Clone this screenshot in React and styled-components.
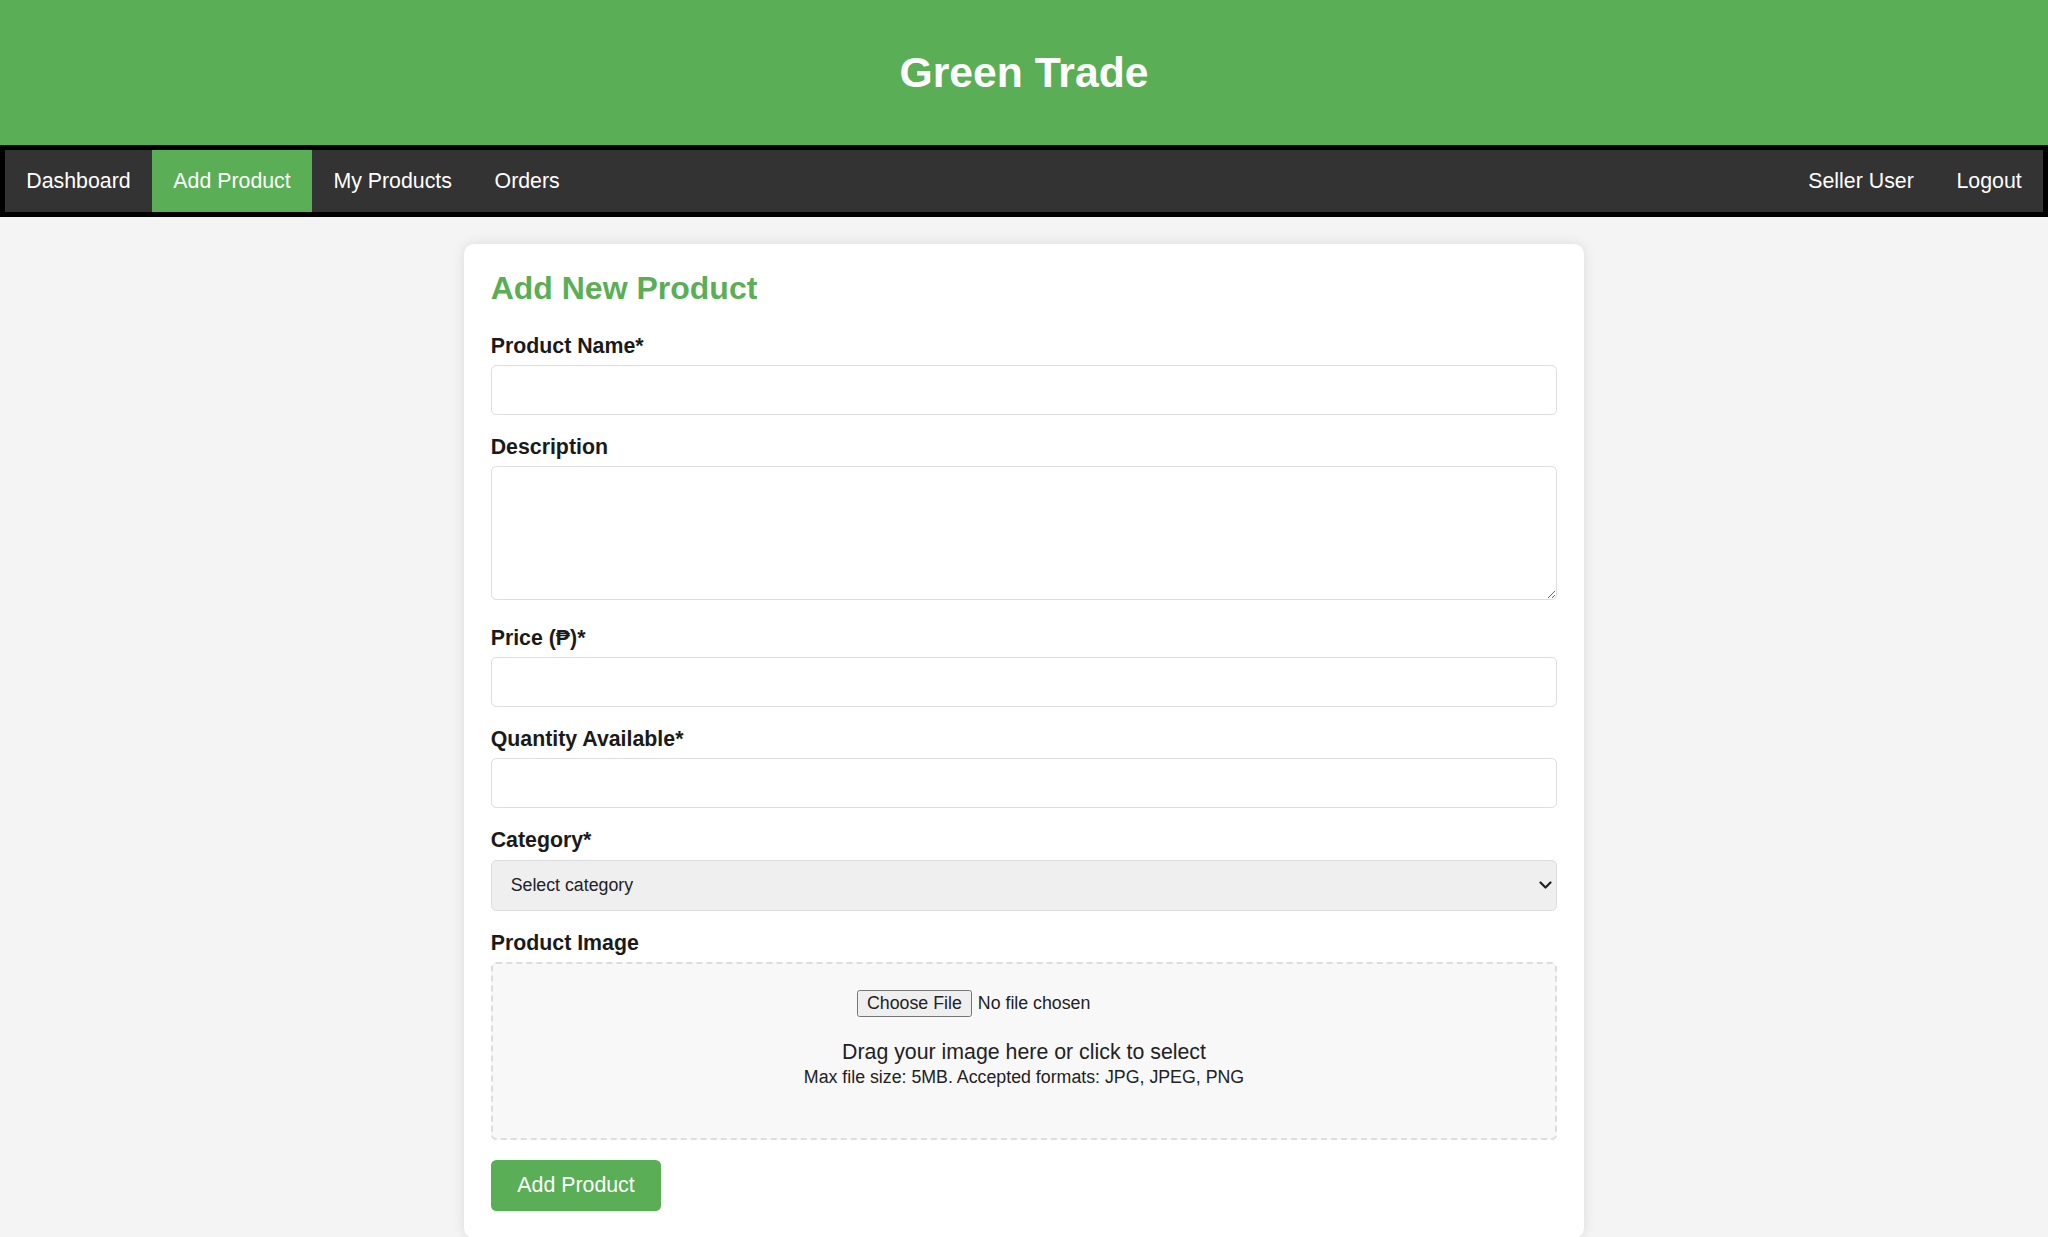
import React from "react";
import styled, { createGlobalStyle } from "styled-components";

const GREEN = "#5aae55";

const Global = createGlobalStyle`
  html, body { margin: 0; padding: 0; }
  body {
    background: #f4f4f4;
    font-family: "Liberation Sans", Arial, sans-serif;
    font-size: 21.33px;
    color: #222;
  }
  * { box-sizing: border-box; }
`;

const Header = styled.header`
  background: ${GREEN};
  color: #fff;
  text-align: center;
  padding: 48px 0;
`;

const Title = styled.h1`
  margin: 0;
  font-size: 42.67px;
  font-weight: bold;
  line-height: 49px;
`;

const Nav = styled.nav`
  display: flex;
  align-items: stretch;
  background: #333;
  border: 5px solid #000;
  height: 72px;
`;

const NavGroup = styled.div`
  display: flex;
  align-items: stretch;
  margin-left: ${(p) => (p.$right ? "auto" : "0")};
`;

const NavLink = styled.a`
  display: flex;
  align-items: center;
  padding: 0 21.33px;
  color: #fff;
  text-decoration: none;
  font-size: 21.33px;
  background: ${(p) => (p.$active ? GREEN : "transparent")};
`;

const Main = styled.main`
  padding: 26.67px 0;
  display: flex;
  justify-content: center;
`;

const Card = styled.section`
  width: 1120px;
  background: #fff;
  border-radius: 10px;
  padding: 26.67px;
  box-shadow: 0 0 13px rgba(0, 0, 0, 0.1);
`;

const Heading = styled.h2`
  margin: 0 0 26.67px;
  color: ${GREEN};
  font-size: 32px;
  font-weight: bold;
  line-height: 36.8px;
`;

const Group = styled.div`
  display: flow-root;
  margin-bottom: 20px;
`;

const Label = styled.label`
  display: block;
  font-weight: bold;
  font-size: 21.33px;
  line-height: 24.5px;
  margin-bottom: 6.67px;
  color: #1a1a1a;
`;

const Input = styled.input`
  display: block;
  width: 100%;
  height: 50px;
  padding: 10.67px;
  border: 1.33px solid #ddd;
  border-radius: 5.33px;
  font-family: inherit;
  font-size: 21.33px;
  background: #fff;
`;

const TextArea = styled.textarea`
  display: block;
  width: 100%;
  height: 133.5px;
  padding: 10.67px;
  border: 1.33px solid #ddd;
  border-radius: 5.33px;
  font-family: inherit;
  font-size: 21.33px;
  margin-bottom: 6.5px;
  resize: vertical;
`;

const SelectWrap = styled.div`
  position: relative;
`;

const Select = styled.select`
  display: block;
  width: 100%;
  height: 51px;
  appearance: none;
  -webkit-appearance: none;
  padding: 0 40px 0 19px;
  border: 1.33px solid #ddd;
  border-radius: 5.33px;
  background: #efefef;
  font-family: inherit;
  font-size: 17.78px;
  color: #222;
`;

const Chevron = styled.svg`
  position: absolute;
  right: 5px;
  top: 50%;
  width: 13px;
  height: 8px;
  margin-top: -4px;
  pointer-events: none;
`;

const DropZone = styled.div`
  border: 2.67px dashed #ddd;
  border-radius: 5.33px;
  background: #f8f8f8;
  padding: 26.67px;
  text-align: center;
`;

const FileInput = styled.input`
  width: 334px;
  font-family: inherit;
  font-size: 17.78px;
  color: #222;
  vertical-align: middle;

  &::file-selector-button {
    font-family: inherit;
    font-size: 17.78px;
    color: #222;
    background: #efefef;
    border: 1.33px solid #767676;
    border-radius: 2.67px;
    padding: 2px 9px;
    margin-right: 6px;
  }
`;

const DropText = styled.p`
  margin: 22.5px 0 21.33px;
  font-size: 21.33px;
  line-height: 24.5px;
  color: #222;
`;

const Hint = styled.small`
  font-size: 17.78px;
`;

const SubmitButton = styled.button`
  display: inline-block;
  background: ${GREEN};
  color: #fff;
  border: none;
  border-radius: 5.33px;
  padding: 13.33px 26.67px;
  font-family: inherit;
  font-size: 21.33px;
  line-height: 24.5px;
  cursor: pointer;
`;

export default function App() {
  return (
    <>
      <Global />
      <Header>
        <Title>Green Trade</Title>
      </Header>
      <Nav>
        <NavGroup>
          <NavLink href="#">Dashboard</NavLink>
          <NavLink href="#" $active>Add Product</NavLink>
          <NavLink href="#">My Products</NavLink>
          <NavLink href="#">Orders</NavLink>
        </NavGroup>
        <NavGroup $right>
          <NavLink href="#">Seller User</NavLink>
          <NavLink href="#">Logout</NavLink>
        </NavGroup>
      </Nav>
      <Main>
        <Card>
          <Heading>Add New Product</Heading>
          <form onSubmit={(e) => e.preventDefault()}>
            <Group>
              <Label htmlFor="name">Product Name*</Label>
              <Input id="name" type="text" />
            </Group>
            <Group>
              <Label htmlFor="desc">Description</Label>
              <TextArea id="desc" />
            </Group>
            <Group>
              <Label htmlFor="price">Price (₱)*</Label>
              <Input id="price" type="number" />
            </Group>
            <Group>
              <Label htmlFor="qty">Quantity Available*</Label>
              <Input id="qty" type="number" />
            </Group>
            <Group>
              <Label htmlFor="cat">Category*</Label>
              <SelectWrap>
                <Select id="cat" defaultValue="">
                  <option value="">Select category</option>
                  <option value="veg">Vegetables</option>
                  <option value="fruit">Fruits</option>
                </Select>
                <Chevron viewBox="0 0 13 8">
                  <path d="M1.5 1.5 L6.5 6.5 L11.5 1.5" fill="none" stroke="#222" strokeWidth="2.2" strokeLinecap="round" strokeLinejoin="round" />
                </Chevron>
              </SelectWrap>
            </Group>
            <Group>
              <Label htmlFor="img">Product Image</Label>
              <DropZone>
                <FileInput id="img" type="file" accept=".jpg,.jpeg,.png" />
                <DropText>
                  Drag your image here or click to select
                  <br />
                  <Hint>Max file size: 5MB. Accepted formats: JPG, JPEG, PNG</Hint>
                </DropText>
              </DropZone>
            </Group>
            <SubmitButton type="submit">Add Product</SubmitButton>
          </form>
        </Card>
      </Main>
    </>
  );
}
